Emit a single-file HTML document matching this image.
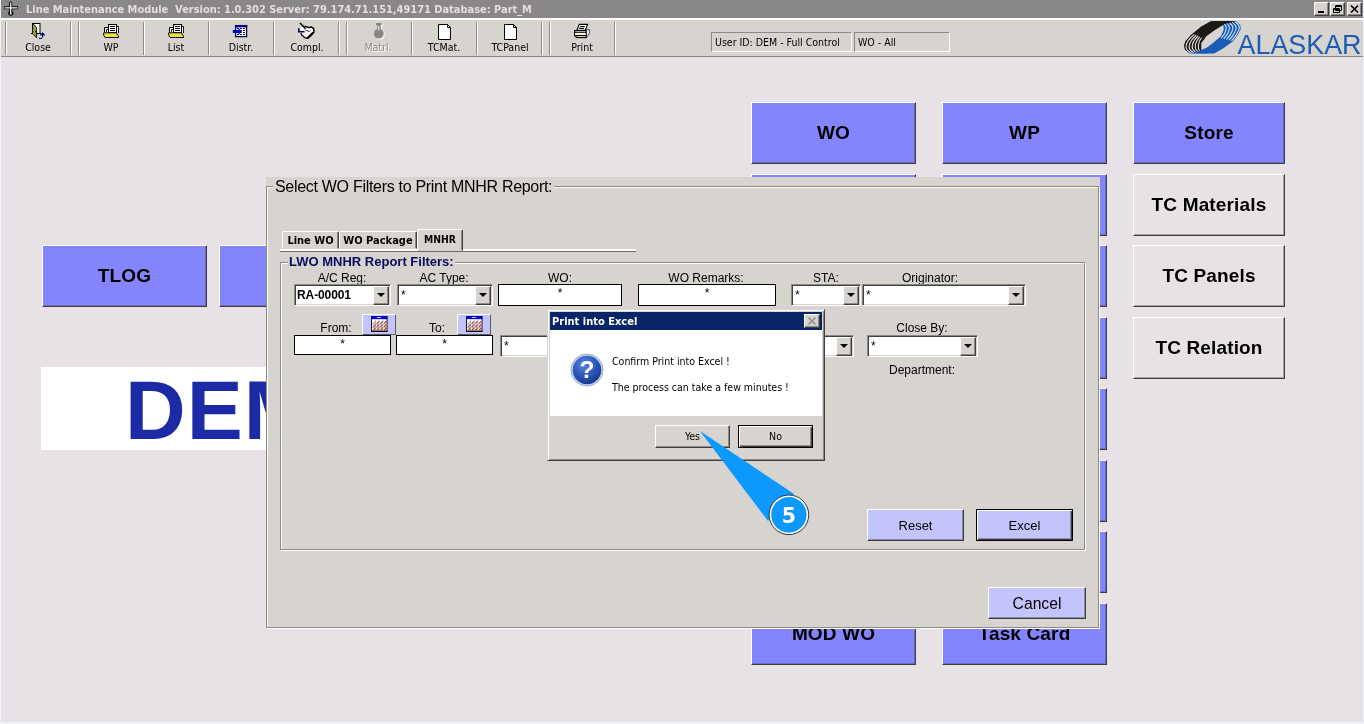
<!DOCTYPE html>
<html><head><meta charset="utf-8"><title>Line Maintenance Module</title>
<style>
*{box-sizing:border-box;margin:0;padding:0}
html,body{width:1364px;height:724px;overflow:hidden;background:#eef2fa}
body{position:relative;font-family:"DejaVu Sans Condensed","DejaVu Sans","Liberation Sans",sans-serif;font-size:10.5px;color:#000}
.abs{position:absolute}
#bg{position:absolute;left:0;top:0;width:1363px;height:722px;background:#e7e2e6}
#app{position:absolute;left:0;top:0;width:1363px;height:722px;overflow:hidden;will-change:transform}
#lstrip{left:0;top:0;width:1px;height:722px;background:#eef2fa}
#app>div,#app>svg{position:absolute}
#title{left:0;top:0;width:1364px;height:18px;background:#8a8789}
#title .t{position:absolute;left:26px;top:2px;letter-spacing:-0.03px;font-weight:bold;font-size:11px;line-height:15px;color:#e2dfdc;white-space:pre}
#tb{left:0;top:18px;width:1364px;height:39px;background:#d7d4cf;border-top:2px solid #fff;border-bottom:1px solid #8a8789}
.sep{position:absolute;top:2px;width:2px;height:33px;border-left:1px solid #8c8a87;border-right:1px solid #fff}
.tbl{position:absolute;top:21px;width:66px;text-align:center;font-size:10.5px;line-height:13px}
.ico{position:absolute;top:4px;width:18px;height:18px}
.sunk{position:absolute;top:12px;height:20px;border:1px solid;border-color:#8c8a87 #fff #fff #8c8a87;font-size:10.5px;line-height:19px;padding-left:3px;white-space:pre}
.wb{position:absolute;top:2px;width:15px;height:14px;background:#d7d4cf;border:1px solid;border-color:#fff #404040 #404040 #fff;box-shadow:inset -1px -1px 0 #8c8a87}
.mb{background:#8484fc;border:1px solid;border-color:#fff #3c3c3c #3c3c3c #fff;box-shadow:inset -1px -1px 0 #6c6cc0;font-family:"Liberation Sans",sans-serif;font-weight:bold;font-size:19px;letter-spacing:.15px;text-align:center;width:165px;height:62px;line-height:60px}
.mb.g{background:#e7e2e6;box-shadow:inset -1px -1px 0 #a8a4a8}
.mb.c{width:152px}
#dem{left:41px;top:367px;padding-top:2px;width:300px;height:83px;background:#fff;font-family:"Liberation Sans",sans-serif;font-weight:bold;font-size:84px;line-height:83px;color:#1c2aa6;padding-left:84px;white-space:pre;letter-spacing:1px}
#dlg{left:266px;top:177px;width:834px;height:452px;background:#d7d4cf;font-family:"Liberation Sans",sans-serif}
#dlg>div{position:absolute}
.fr{border:1px solid #8c8a87;box-shadow:1px 1px 0 #fff, inset 1px 1px 0 #fff}
.lg{position:absolute;background:#d7d4cf;white-space:pre}
.lab{font-size:12px;line-height:14px;text-align:center;white-space:pre;width:120px}
.cmb{height:22px;background:#fff;border:1px solid;border-color:#8c8a87 #fff #fff #8c8a87;box-shadow:inset 1px 1px 0 #404040, inset -1px -1px 0 #d7d4cf;font-size:12px;line-height:20px;padding-left:3px}
.cmb i{position:absolute;right:1px;top:1px;width:16px;height:19px;background:#d7d4cf;border:1px solid;border-color:#fff #404040 #404040 #fff;box-shadow:inset -1px -1px 0 #8c8a87}
.cmb i:after{content:"";position:absolute;left:3px;top:6px;border:4px solid transparent;border-top:4px solid #000;border-bottom:0}
.txt{height:22px;background:#fff;border:1px solid #000;font-size:12px;line-height:16px;text-align:center}
.lb{background:#c4c4fc;border:1px solid;border-color:#fff #3c3c3c #3c3c3c #fff;box-shadow:inset -1px -1px 0 #8c8ab0;text-align:center;white-space:pre}
.tab{height:18px;border:1px solid;border-color:#fff #404040 transparent #fff;font-family:"DejaVu Sans Condensed","DejaVu Sans",sans-serif;font-weight:bold;font-size:11px;line-height:17px;text-align:center;white-space:pre;border-radius:2px 2px 0 0;box-shadow:inset -1px 0 0 #8c8a87}
.cal{width:34px;height:21px;background:#c4c4fc;border:1px solid;border-color:#fff #5a5a64 #5a5a64 #fff}
#mbx{left:547px;top:309px;width:278px;height:152px;background:#d7d4cf;border:1px solid;border-color:#d7d4cf #404040 #404040 #d7d4cf;box-shadow:inset 1px 1px 0 #fff, inset -1px -1px 0 #8c8a87}
#mbx>div,#mbx>svg{position:absolute}
.btn{height:23px;width:75px;background:#d7d4cf;border:1px solid;border-color:#fff #404040 #404040 #fff;box-shadow:inset -1px -1px 0 #8c8a87;text-align:center;font-size:10.5px;line-height:20px}
</style></head><body>
<div id="bg"></div><div id="app">
<div class="mb " style="left:751px;top:102px">WO</div>
<div class="mb " style="left:942px;top:102px">WP</div>
<div class="mb " style="left:751px;top:174px"></div>
<div class="mb " style="left:942px;top:174px"></div>
<div class="mb " style="left:751px;top:245px"></div>
<div class="mb " style="left:942px;top:245px"></div>
<div class="mb " style="left:751px;top:317px"></div>
<div class="mb " style="left:942px;top:317px"></div>
<div class="mb " style="left:751px;top:388px"></div>
<div class="mb " style="left:942px;top:388px"></div>
<div class="mb " style="left:751px;top:460px"></div>
<div class="mb " style="left:942px;top:460px"></div>
<div class="mb " style="left:751px;top:531px"></div>
<div class="mb " style="left:942px;top:531px"></div>
<div class="mb " style="left:751px;top:603px">MOD WO</div>
<div class="mb " style="left:942px;top:603px">Task Card</div>
<div class="mb c" style="left:1133px;top:102px">Store</div>
<div class="mb c g" style="left:1133px;top:174px">TC Materials</div>
<div class="mb c g" style="left:1133px;top:245px">TC Panels</div>
<div class="mb c g" style="left:1133px;top:317px">TC Relation</div>
<div class="mb " style="left:42px;top:245px">TLOG</div>
<div class="mb " style="left:219px;top:245px"></div>
<div id="dem">DEM</div>
<div id="title"><svg class="abs" style="left:0;top:0" width="22" height="18" viewBox="0 0 22 18"><path d="M10.7 2.2V15.2M4 7.8H18M8.3 13.2H13.4" stroke="#000" stroke-width="3" fill="none"/><path d="M10.7 1.5V15.8" stroke="#000" stroke-width="1.6"/><path d="M10.7 2.5V14.8M4.6 7.9H17.4" stroke="#fff" stroke-width="1.2" fill="none"/><path d="M9.8 13.3h2" stroke="#d0d0d0" stroke-width=".8"/></svg><span class="t">Line Maintenance Module  Version: 1.0.302 Server: 79.174.71.151,49171 Database: Part_M</span><div class="wb" style="left:1314px"><svg class="abs" style="left:0;top:0" width="13" height="12"><rect x="3" y="8" width="6" height="2" fill="#000"/></svg></div><div class="wb" style="left:1330px"><svg class="abs" style="left:0;top:0" width="13" height="12"><path d="M4.5 2.5h6v5h-6zM4 3.5h7M2.5 5.5h6v4h-6zM2 6.5h7" stroke="#000" fill="#d7d4cf"/></svg></div><div class="wb" style="left:1347px"><svg class="abs" style="left:0;top:0" width="13" height="12"><path d="M3 2.5l7 7M10 2.5l-7 7" stroke="#000" stroke-width="1.6"/></svg></div></div>
<div id="tb"><div class="sep" style="left:5px"></div><div class="sep" style="left:70px"></div><div class="sep" style="left:78px"></div><div class="sep" style="left:143px"></div><div class="sep" style="left:208px"></div><div class="sep" style="left:273px"></div><div class="sep" style="left:338px"></div><div class="sep" style="left:346px"></div><div class="sep" style="left:411px"></div><div class="sep" style="left:476px"></div><div class="sep" style="left:541px"></div><div class="sep" style="left:549px"></div><div class="sep" style="left:614px"></div><svg class="abs" style="left:0;top:0;pointer-events:none" width="640" height="38" viewBox="0 20 640 38"><rect x="32.5" y="23.5" width="7.5" height="10" fill="#fff" stroke="#000"/><path d="M31 33.5h2M40 33.5h1.2" stroke="#000"/><path d="M32.6 23.6L36.6 27.3V37.8L32.6 33.8Z" fill="#a4a428" stroke="#000" stroke-width=".9" stroke-linejoin="round"/><rect x="35.2" y="31" width="1" height="1.2" fill="#000"/><path d="M42.6 37.6V34M40.4 35.4L42.6 33.2L44.8 35.4" fill="none" stroke="#000080" stroke-width="1.3"/><path d="M39 38.4h3" stroke="#000080" stroke-width="1.1"/><g transform="translate(0,0)"><path d="M104.5 32.5V27.5H108.5" fill="none" stroke="#000"/><rect x="105" y="28" width="3.5" height="4.5" fill="#fff"/><path d="M106.5 32V29.5H108" fill="none" stroke="#000" stroke-width=".9"/><path d="M116.5 26.5H118.5V33" fill="none" stroke="#000"/><rect x="116.8" y="27" width="1.3" height="5.5" fill="#fff"/><rect x="108.5" y="24.5" width="8" height="8" fill="#fff" stroke="#000"/><path d="M110 26.5h5M110 28.5h5M110 30.5h5" stroke="#000"/><path d="M103.7 32.8H116.3L118.5 36.2V37.5H105.2L103.7 35.2Z" fill="#dede38" stroke="#000" stroke-linejoin="miter"/><path d="M104.5 34h12M105.5 35.5h12.5M106 36.8h12" stroke="#f4f4b0" stroke-width=".5" stroke-dasharray="1 1"/></g><g transform="translate(65,0)"><path d="M104.5 32.5V27.5H108.5" fill="none" stroke="#000"/><rect x="105" y="28" width="3.5" height="4.5" fill="#fff"/><path d="M106.5 32V29.5H108" fill="none" stroke="#000" stroke-width=".9"/><path d="M116.5 26.5H118.5V33" fill="none" stroke="#000"/><rect x="116.8" y="27" width="1.3" height="5.5" fill="#fff"/><rect x="108.5" y="24.5" width="8" height="8" fill="#fff" stroke="#000"/><path d="M110 26.5h5M110 28.5h5M110 30.5h5" stroke="#000"/><path d="M103.7 32.8H116.3L118.5 36.2V37.5H105.2L103.7 35.2Z" fill="#dede38" stroke="#000" stroke-linejoin="miter"/><path d="M104.5 34h12M105.5 35.5h12.5M106 36.8h12" stroke="#f4f4b0" stroke-width=".5" stroke-dasharray="1 1"/></g><rect x="235.6" y="25.6" width="11" height="11" fill="#fff" stroke="#000040" stroke-width="1.3"/><rect x="235" y="25" width="12.2" height="2.4" fill="#000080"/><path d="M237 28.5h8M237 30.5h8M237 32.5h8M237 34.5h8" stroke="#000040" stroke-width="1" stroke-dasharray="1.8 1.2"/><path d="M232.8 30.1H238.3V28L241.9 31.5L238.3 35V32.9H232.8Z" fill="#0000d0"/><path d="M300.5 27.5L306 27L313.5 28.5L314 32L307.2 38.3L301.5 33.5L300 31Z" fill="#fff"/><path d="M300 23L305.6 28.8" stroke="#000" stroke-width="1.5" fill="none"/><path d="M304.5 26.2L309 27.6L311 27L313.6 28.4L314 32L307.4 38.3L305.6 37.9" stroke="#000" stroke-width="1.5" fill="none" stroke-linejoin="round"/><path d="M307.4 38.3L313.3 32.6" stroke="#000" stroke-width="2.2"/><path d="M301 32.8L301.6 35.2L303.5 36.2L304.2 37.5L305.8 37.9" stroke="#000" stroke-width="1.1" fill="none"/><path d="M305 29.5l1.5 1.5M307.5 30l1 2M309.5 31.5l1-1" stroke="#000" stroke-width=".9"/><path d="M298.8 28.2V31.8H304.6" stroke="#000060" stroke-width="1.6" fill="none"/><g fill="#fff" transform="translate(1,1)"><rect x="376" y="23" width="5.6" height="2.2"/><rect x="377.2" y="25" width="3.6" height="6"/><circle cx="378.8" cy="33.7" r="4.9"/></g><g fill="#8a8886"><rect x="376" y="23" width="5.6" height="2.2"/><rect x="377.2" y="25" width="3.6" height="6"/><circle cx="378.8" cy="33.7" r="4.9"/></g><rect x="378.3" y="26" width=".9" height="4.6" fill="#fff"/><g transform="translate(0,0)"><path d="M438.5 24.5H447.5L450.5 27.5V39.5H438.5Z" fill="#fff" stroke="#000"/><path d="M447.5 24.5V27.5H450.5" fill="none" stroke="#000"/></g><g transform="translate(66,0)"><path d="M438.5 24.5H447.5L450.5 27.5V39.5H438.5Z" fill="#fff" stroke="#000"/><path d="M447.5 24.5V27.5H450.5" fill="none" stroke="#000"/></g><path d="M586.3 29.6H589.6V33.2L586.8 37.2" fill="#e8e8e8" stroke="#000" stroke-width="1" stroke-dasharray="1.2 .8"/><path d="M579.3 24.4H587.6L585.2 30.2H576.9Z" fill="#fff" stroke="#000" stroke-width="1.1"/><path d="M580.2 26.5h4.6M579.3 28.4h4.6" stroke="#000" stroke-width="1.1"/><rect x="574.6" y="30.6" width="11.6" height="5.2" fill="#fff" stroke="#000" stroke-width="1.2"/><path d="M575 32.3h11" stroke="#000" stroke-width="1"/><rect x="575.4" y="33" width="10" height="2" fill="#f0f0d8"/><rect x="576.2" y="35.6" width="10" height="2" fill="#f4f4dc" stroke="#000" stroke-width="1.1"/></svg><div class="tbl" style="left:5px">Close</div><div class="tbl" style="left:78px">WP</div><div class="tbl" style="left:143px">List</div><div class="tbl" style="left:208px">Distr.</div><div class="tbl" style="left:274px">Compl.</div><div class="tbl" style="left:345px;color:#8c8a87;text-shadow:1px 1px 0 #fff">Matrl.</div><div class="tbl" style="left:411px">TCMat.</div><div class="tbl" style="left:477px">TCPanel</div><div class="tbl" style="left:549px">Print</div><div class="sunk" style="left:711px;width:141px">User ID: DEM - Full Control</div><div class="sunk" style="left:854px;width:96px">WO - All</div><svg class="abs" style="left:1174px;top:-1px" width="190" height="38" viewBox="1174 19 190 38"><path d="M1184.1 45.6 L1185.5 41.2 L1191.0 35.1 L1201.0 26.8 L1210.9 21.3 L1224.2 20.9 L1235.8 21.3 L1240.2 24.6 L1240.8 29.0 L1238.0 34.6 L1233.0 41.2 L1224.2 47.8 L1214.3 53.4 L1202.1 53.8 L1189.4 53.4 L1185.0 49.8Z" fill="#1a5cb8"/><path d="M1184.1 45.6 L1185.5 41.2 L1191.0 35.1 L1201.0 26.8 L1210.9 21.3 L1224.2 20.9 L1235.8 21.3 L1236.9 23.2 L1229.7 23.5 L1224.2 24.0 L1223.1 25.1 L1214.3 30.4 L1206.5 36.2 L1201.4 42.9 L1201.3 49.9 L1197.7 51.4 L1189.4 52.4 L1185.0 49.8Z" fill="#1c1814"/><path d="M1201.3 49.9 L1201.4 42.9 L1206.5 36.2 L1214.3 30.4 L1223.1 25.1 L1223.9 29.0 L1221.2 35.7 L1213.1 42.9 L1206.5 47.8Z" fill="#d7d4cf"/><path d="M1194.4 34.3 C1193.5 35.2 1190.2 37.9 1188.8 39.8 C1187.5 41.7 1186.4 44.0 1186.1 45.6 C1185.8 47.3 1186.2 48.5 1187.1 49.8 C1187.9 51.0 1190.6 52.5 1191.3 53.0" fill="none" stroke="#e4e2de" stroke-width="1.1"/><path d="M1196.2 35.1 C1195.4 36.0 1192.6 38.5 1191.5 40.2 C1190.3 41.9 1189.4 44.1 1189.2 45.6 C1188.9 47.2 1189.3 48.3 1189.9 49.5 C1190.6 50.6 1192.8 52.0 1193.3 52.5" fill="none" stroke="#e4e2de" stroke-width="1.1"/><path d="M1198.0 36.0 C1197.3 36.7 1195.0 39.0 1194.1 40.6 C1193.1 42.2 1192.5 44.2 1192.3 45.6 C1192.0 47.1 1192.3 48.2 1192.8 49.2 C1193.3 50.2 1195.0 51.5 1195.4 51.9" fill="none" stroke="#e4e2de" stroke-width="1.1"/><path d="M1199.8 36.8 C1199.3 37.5 1197.4 39.5 1196.7 41.0 C1195.9 42.5 1195.5 44.3 1195.3 45.6 C1195.2 46.9 1195.3 48.0 1195.7 48.9 C1196.0 49.9 1197.2 51.0 1197.5 51.4" fill="none" stroke="#e4e2de" stroke-width="1.1"/><path d="M1201.6 37.7 C1201.2 38.3 1199.8 40.1 1199.3 41.4 C1198.8 42.7 1198.5 44.4 1198.4 45.6 C1198.3 46.8 1198.4 47.8 1198.6 48.6 C1198.7 49.5 1199.4 50.5 1199.6 50.8" fill="none" stroke="#e4e2de" stroke-width="1.1"/><path d="M1224.5 24.0 C1224.8 24.5 1225.9 26.0 1226.1 27.0 C1226.4 28.1 1226.2 29.0 1225.9 30.3 C1225.5 31.5 1224.9 33.0 1224.2 34.3 C1223.4 35.6 1221.7 37.5 1221.3 38.1" fill="none" stroke="#cfe4fa" stroke-width="1.1"/><path d="M1227.0 23.4 C1227.3 23.9 1228.9 25.4 1229.2 26.5 C1229.6 27.6 1229.5 28.7 1229.1 30.0 C1228.8 31.3 1228.1 32.9 1227.2 34.4 C1226.3 35.8 1224.4 38.0 1223.8 38.8" fill="none" stroke="#cfe4fa" stroke-width="1.1"/><path d="M1229.6 22.8 C1230.0 23.3 1232.0 24.8 1232.5 26.0 C1232.9 27.1 1232.9 28.3 1232.6 29.7 C1232.2 31.1 1231.4 32.8 1230.4 34.4 C1229.4 36.1 1227.2 38.6 1226.5 39.5" fill="none" stroke="#cfe4fa" stroke-width="1.1"/><path d="M1232.0 22.2 C1232.6 22.7 1234.9 24.2 1235.5 25.4 C1236.2 26.6 1236.2 27.9 1235.8 29.5 C1235.5 31.0 1234.5 32.7 1233.4 34.5 C1232.3 36.3 1229.8 39.2 1229.1 40.2" fill="none" stroke="#cfe4fa" stroke-width="1.1"/><path d="M1234.5 21.6 C1235.2 22.2 1237.8 23.6 1238.6 24.9 C1239.4 26.2 1239.4 27.6 1239.1 29.2 C1238.7 30.8 1237.6 32.6 1236.4 34.5 C1235.2 36.5 1232.5 39.8 1231.7 40.8" fill="none" stroke="#cfe4fa" stroke-width="1.1"/><text x="1237.5" y="54.3" font-family="Liberation Sans, sans-serif" font-size="27" fill="#1c5cb4" textLength="124" lengthAdjust="spacingAndGlyphs">ALASKAR</text></svg></div>
<div id="dlg"><div class="fr" style="left:0px;top:9px;width:833px;height:442px"></div><div class="lg" style="left:7px;top:0px;font-size:16px;letter-spacing:-0.3px;line-height:19px;padding:0 2px">Select WO Filters to Print MNHR Report:</div><div style="left:14px;top:72px;width:356px;height:3px;background:#fff;border-bottom:1px solid #6c6a68"></div><div class="tab" style="left:16px;top:54px;width:57px">Line WO</div><div class="tab" style="left:73px;top:54px;width:78px">WO Package</div><div class="tab" style="left:151px;top:52px;width:46px;height:22px;background:#d7d4cf;line-height:18px;font-size:10.3px">MNHR</div><div class="fr" style="left:14px;top:85px;width:805px;height:288px"></div><div class="lg" style="left:22px;top:77px;font-weight:bold;font-size:13px;line-height:15px;color:#0a0a5e;padding:0 1px">LWO MNHR Report Filters:</div><div class="lab" style="left:16px;top:94px">A/C Reg:</div><div class="lab" style="left:118px;top:94px">AC Type:</div><div class="lab" style="left:234px;top:94px">WO:</div><div class="lab" style="left:380px;top:94px">WO Remarks:</div><div class="lab" style="left:500px;top:94px">STA:</div><div class="lab" style="left:604px;top:94px">Originator:</div><div class="lab" style="left:10px;top:144px">From:</div><div class="lab" style="left:111px;top:144px">To:</div><div class="lab" style="left:596px;top:144px">Close By:</div><div class="lab" style="left:596px;top:186px">Department:</div><div class="cmb" style="left:28px;top:107px;width:97px;font-weight:bold;letter-spacing:-.1px;padding-left:2px">RA-00001<i></i></div><div class="cmb" style="left:131px;top:107px;width:96px">*<i></i></div><div class="txt" style="left:232px;top:107px;width:124px;height:22px">*</div><div class="txt" style="left:372px;top:107px;width:138px;height:22px">*</div><div class="cmb" style="left:525px;top:107px;width:70px">*<i></i></div><div class="cmb" style="left:596px;top:107px;width:164px">*<i></i></div><div class="txt" style="left:28px;top:158px;width:97px;height:20px">*</div><div class="txt" style="left:130px;top:158px;width:97px;height:20px">*</div><div class="cmb" style="left:234px;top:158px;width:354px">*<i></i></div><div class="cmb" style="left:601px;top:158px;width:111px">*<i></i></div><div class="cal" style="left:96px;top:137px"><svg class="abs" style="left:8px;top:1px" width="17" height="16"><rect x=".5" y=".5" width="15.5" height="15" fill="#fff" stroke="#181830"/><rect x="0" y="0" width="16.5" height="3.2" fill="#0a0ac0"/><rect x="6" y="1" width="4" height="1" fill="#c0c0ff"/><path d="M2.2 7.6l2.2 -2.2" stroke="#b83c30" stroke-width="0.85"/><path d="M5.8 7.6l2.2 -2.2" stroke="#c83828" stroke-width="1.3"/><path d="M9.4 7.6l2.2 -2.2" stroke="#c83828" stroke-width="1.3"/><path d="M13.0 7.6l2.2 -2.2" stroke="#c83828" stroke-width="1.3"/><path d="M2.2 10.9l2.2 -2.2" stroke="#c83828" stroke-width="1.3"/><path d="M5.8 10.9l2.2 -2.2" stroke="#c83828" stroke-width="1.3"/><path d="M9.4 10.9l2.2 -2.2" stroke="#c83828" stroke-width="1.3"/><path d="M13.0 10.9l2.2 -2.2" stroke="#c83828" stroke-width="1.3"/><path d="M2.2 14.2l2.2 -2.2" stroke="#c83828" stroke-width="1.3"/><path d="M5.8 14.2l2.2 -2.2" stroke="#c83828" stroke-width="1.3"/><path d="M9.4 14.2l2.2 -2.2" stroke="#c83828" stroke-width="1.3"/><path d="M13.0 14.2l2.2 -2.2" stroke="#c83828" stroke-width="1.3"/><path d="M1 8.2h15M1 11.5h15M4.6 4v11M8.2 4v11M11.8 4v11" stroke="#8a8a8a" stroke-width=".6"/><path d="M.5 15.2h16" stroke="#000" stroke-width="1.2"/></svg></div><div class="cal" style="left:191px;top:137px"><svg class="abs" style="left:8px;top:1px" width="17" height="16"><rect x=".5" y=".5" width="15.5" height="15" fill="#fff" stroke="#181830"/><rect x="0" y="0" width="16.5" height="3.2" fill="#0a0ac0"/><rect x="6" y="1" width="4" height="1" fill="#c0c0ff"/><path d="M2.2 7.6l2.2 -2.2" stroke="#b83c30" stroke-width="0.85"/><path d="M5.8 7.6l2.2 -2.2" stroke="#c83828" stroke-width="1.3"/><path d="M9.4 7.6l2.2 -2.2" stroke="#c83828" stroke-width="1.3"/><path d="M13.0 7.6l2.2 -2.2" stroke="#c83828" stroke-width="1.3"/><path d="M2.2 10.9l2.2 -2.2" stroke="#c83828" stroke-width="1.3"/><path d="M5.8 10.9l2.2 -2.2" stroke="#c83828" stroke-width="1.3"/><path d="M9.4 10.9l2.2 -2.2" stroke="#c83828" stroke-width="1.3"/><path d="M13.0 10.9l2.2 -2.2" stroke="#c83828" stroke-width="1.3"/><path d="M2.2 14.2l2.2 -2.2" stroke="#c83828" stroke-width="1.3"/><path d="M5.8 14.2l2.2 -2.2" stroke="#c83828" stroke-width="1.3"/><path d="M9.4 14.2l2.2 -2.2" stroke="#c83828" stroke-width="1.3"/><path d="M13.0 14.2l2.2 -2.2" stroke="#c83828" stroke-width="1.3"/><path d="M1 8.2h15M1 11.5h15M4.6 4v11M8.2 4v11M11.8 4v11" stroke="#8a8a8a" stroke-width=".6"/><path d="M.5 15.2h16" stroke="#000" stroke-width="1.2"/></svg></div><div class="lb" style="left:601px;top:332px;width:97px;height:32px;font-size:13px;line-height:32px">Reset</div><div class="lb" style="left:710px;top:332px;width:97px;height:32px;font-size:13px;line-height:32px;border:1px solid #000;box-shadow:inset 1px 1px 0 #fff, inset -1px -1px 0 #3c3c3c, inset -2px -2px 0 #8c8ab0">Excel</div><div class="lb" style="left:722px;top:410px;width:98px;height:32px;font-size:15.7px;line-height:32px">Cancel</div></div>
<div id="mbx"><div style="left:2px;top:2px;width:272px;height:18px;background:#0a246a;color:#fff;font-weight:bold;font-size:11px;line-height:19px;padding-left:2px;white-space:pre">Print into Excel</div><div class="wb" style="left:256px;top:4px;width:16px;height:14px"><svg class="abs" style="left:0;top:0" width="14" height="12"><path d="M3.5 2.5l7 7M10.5 2.5l-7 7" stroke="#8c8a87" stroke-width="1.4"/></svg></div><div style="left:2px;top:20px;width:272px;height:86px;background:#fff"></div><svg style="left:22px;top:43px" width="34" height="34" viewBox="0 0 34 34"><defs><radialGradient id="qg" cx=".4" cy=".3" r=".8"><stop offset="0" stop-color="#5a86e0"/><stop offset=".6" stop-color="#2450b4"/><stop offset="1" stop-color="#12307c"/></radialGradient></defs><circle cx="17" cy="17" r="16" fill="#c8d4ec" stroke="#8898c0" stroke-width=".8"/><circle cx="17" cy="17" r="14.3" fill="url(#qg)"/><text x="17" y="25" text-anchor="middle" font-family="Liberation Sans, sans-serif" font-weight="bold" font-size="24.5" fill="#fff">?</text></svg><div style="left:64px;top:45px;font-size:10.5px;line-height:13px;white-space:pre">Confirm Print into Excel !</div><div style="left:64px;top:71px;font-size:10.5px;line-height:13px;white-space:pre">The process can take a few minutes !</div><div class="btn" style="left:107px;top:115px">Yes</div><div class="btn" style="left:190px;top:115px;border-color:#000;box-shadow:inset 1px 1px 0 #fff, inset -1px -1px 0 #404040, inset -2px -2px 0 #8c8a87;line-height:21px">No</div></div>
<svg style="left:690px;top:420px" width="140" height="125" viewBox="690 420 140 125"><path d="M700 431 L794 494 L768 521 Z" fill="#0c98fc"/><circle cx="788.9" cy="514.8" r="19.8" fill="#fff" stroke="#2a3a4a" stroke-width="1"/><circle cx="788.9" cy="514.8" r="17.7" fill="#0c98fc"/><text x="788.9" y="522.8" text-anchor="middle" font-family="DejaVu Sans, Liberation Sans, sans-serif" font-weight="bold" font-size="20.5" fill="#fff">5</text></svg>
<div id="lstrip"></div></div>
</body></html>
